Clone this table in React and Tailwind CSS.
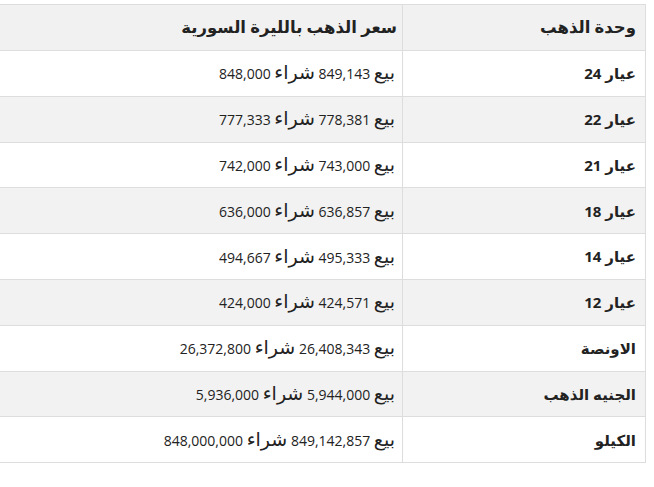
import React from "react";

const rows = [
  ["عيار 24", "849,143", "848,000"],
  ["عيار 22", "778,381", "777,333"],
  ["عيار 21", "743,000", "742,000"],
  ["عيار 18", "636,857", "636,000"],
  ["عيار 14", "495,333", "494,667"],
  ["عيار 12", "424,571", "424,000"],
  ["الاونصة", "26,408,343", "26,372,800"],
  ["الجنيه الذهب", "5,944,000", "5,936,000"],
  ["الكيلو", "849,142,857", "848,000,000"],
];

export default function App() {
  return (
    <div className="w-[654px] h-[487px] bg-white overflow-hidden pt-[4px]" style={{ fontFamily: '"Open Sans", "DejaVu Sans", sans-serif' }}>
      <table dir="rtl" className="ml-[-1px] w-[647px] border-collapse text-[#222]">
        <thead>
          <tr className="bg-[#f1f1f1] h-[46px]">
            <th className="w-[243px] border border-[#dddddd] text-right font-bold text-[16.5px] pr-[9px]">وحدة الذهب</th>
            <th className="border border-[#dddddd] text-right font-bold text-[16.5px] pr-[5px]">سعر الذهب بالليرة السورية</th>
          </tr>
        </thead>
        <tbody>
          {rows.map((r, i) => (
            <tr key={i} className={i % 2 === 0 ? "bg-white h-[45.8px]" : "bg-[#f2f2f2] h-[45.8px]"}>
              <td className="border border-[#dddddd] text-right font-bold text-[15px] pr-[9px]">{r[0]}</td>
              <td className="border border-[#dddddd] text-right text-[14px] pr-[7px] leading-[20px]">
                <span className="text-[19px]">بيع</span> {r[1]} <span className="text-[19px]">شراء</span> {r[2]}
              </td>
            </tr>
          ))}
        </tbody>
      </table>
    </div>
  );
}
